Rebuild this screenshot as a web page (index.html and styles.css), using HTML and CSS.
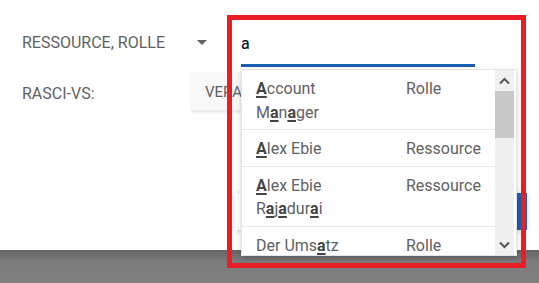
FILE: index.html
```html
<!DOCTYPE html>
<html lang="de">
<head>
<meta charset="utf-8">
<title>Filter</title>
<link rel="stylesheet" href="styles.css">
</head>
<body>
<div class="app">
  <main class="content">
    <div class="filter-row">
      <div class="select">
        <span class="select-label">RESSOURCE, ROLLE</span>
        <span class="caret"></span>
      </div>
      <div class="search">a</div>
    </div>
    <div class="field-row">
      <span class="field-label">RASCI-VS:</span>
      <button class="toggle">VERANTWORTLICH</button>
    </div>
    <div class="actions">
      <div class="action-card"><span class="primary-btn"></span></div>
    </div>

    <div class="dropdown">
      <ul class="list">
        <li class="item">
          <span class="name"><b>A</b>ccount M<b>a</b>n<b>a</b>ger</span>
          <span class="type">Rolle</span>
        </li>
        <li class="item">
          <span class="name"><b>A</b>lex Ebie</span>
          <span class="type">Ressource</span>
        </li>
        <li class="item">
          <span class="name"><b>A</b>lex Ebie R<b>a</b>j<b>a</b>dur<b>a</b>i</span>
          <span class="type">Ressource</span>
        </li>
        <li class="item">
          <span class="name">Der Ums<b>a</b>tz</span>
          <span class="type">Rolle</span>
        </li>
      </ul>
      <div class="scrollbar">
        <span class="sb-btn"><svg width="11" height="8" viewBox="0 0 11 8"><path d="M1 6.5 L5.5 2 L10 6.5" fill="none" stroke="#555" stroke-width="2"/></svg></span>
        <span class="sb-thumb"></span>
        <span class="sb-track"></span>
        <span class="sb-btn"><svg width="11" height="8" viewBox="0 0 11 8"><path d="M1 1.5 L5.5 6 L10 1.5" fill="none" stroke="#555" stroke-width="2"/></svg></span>
      </div>
    </div>

    <div class="highlight-frame"></div>
  </main>
  <footer class="footer"></footer>
</div>
</body>
</html>
```

FILE: styles.css
```css
html, body {
  margin: 0;
  padding: 0;
  background: #fff;
}
body {
  font-family: Roboto, "Noto Sans", sans-serif;
  width: 539px;
  height: 283px;
  overflow: hidden;
}
.app {
  display: flex;
  flex-direction: column;
  height: 283px;
}
.content {
  position: relative;
  height: 250px;
  padding-left: 22px;
  box-sizing: border-box;
  color: #616161;
}
.filter-row {
  display: flex;
  align-items: flex-start;
  padding-top: 31px;
}
.select {
  width: 185px;
  display: flex;
  align-items: center;
  justify-content: space-between;
  font-size: 16px;
  line-height: 24px;
}
.caret {
  width: 0;
  height: 0;
  border-left: 5px solid transparent;
  border-right: 5px solid transparent;
  border-top: 5px solid #616161;
  margin-top: -1px;
}
.search {
  margin-left: 34px;
  width: 234px;
  margin-top: 1px;
  padding-bottom: 8px;
  font-size: 16px;
  line-height: 24px;
  color: #000;
  border-bottom: 3px solid #1a5fb4;
}
.field-row {
  display: flex;
  align-items: flex-start;
  margin-top: 5px;
}
.field-label {
  width: 168px;
  padding-top: 10px;
  font-size: 16px;
  line-height: 24px;
}
.toggle {
  height: 38px;
  padding: 2px 15px 0;
  border: none;
  background: #f8f8f8;
  color: #616161;
  font-family: Roboto, sans-serif;
  font-size: 15px;
  line-height: 36px;
  box-shadow: 0 4px 2px -1px #ebebeb;
}
.actions {
  margin-top: 83px;
  margin-left: 213px;
}
.action-card {
  width: 292px;
  height: 37px;
  background: #fff;
  box-shadow: 0 1px 5px rgba(0, 0, 0, 0.18);
  display: flex;
  justify-content: flex-end;
}
.primary-btn {
  width: 70px;
  height: 37px;
  background: #1a5fb4;
}
.dropdown {
  position: absolute;
  left: 241px;
  top: 69px;
  width: 276px;
  height: 187px;
  box-sizing: border-box;
  border: 1px solid #e4e4e4;
  background: #fff;
  box-shadow: 0 3px 6px rgba(0, 0, 0, 0.16);
  display: flex;
  padding-right: 2px;
  overflow: hidden;
}
.list {
  list-style: none;
  margin: 0;
  padding: 0;
  flex: 1;
}
.item {
  display: grid;
  grid-template-columns: 112px 1fr;
  column-gap: 38px;
  padding: 7px 14px 5px;
  font-size: 16px;
  line-height: 23.5px;
  color: #616161;
  border-bottom: 1px solid #e8e8e8;
}
.item b {
  color: #444;
  font-weight: 700;
  text-decoration: underline;
  text-decoration-thickness: 2px;
  text-underline-offset: 2px;
}
.scrollbar {
  width: 19px;
  display: flex;
  flex-direction: column;
  background: #f0f0f0;
}
.sb-btn {
  height: 21px;
  display: flex;
  align-items: center;
  justify-content: center;
}
.sb-thumb {
  height: 47px;
  background: #c8c8c8;
}
.sb-track {
  flex: 1;
}
.highlight-frame {
  position: absolute;
  left: 227px;
  top: 15px;
  width: 299px;
  height: 253px;
  box-sizing: border-box;
  border: 5px solid #ea1c24;
  z-index: 5;
}
.footer {
  height: 33px;
  background: linear-gradient(#636363, #7c7c7c 35%, #808080);
}
```
